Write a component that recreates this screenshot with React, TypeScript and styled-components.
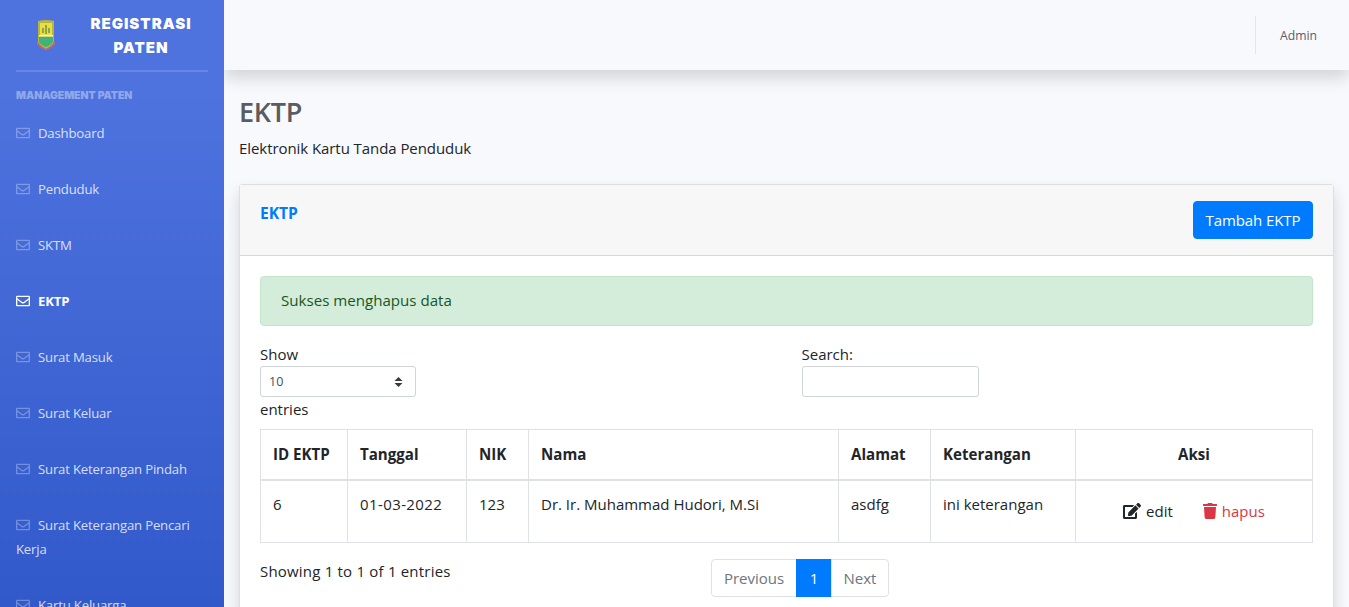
import React from "react";
import styled, { createGlobalStyle } from "styled-components";
import { FaRegEnvelope, FaEdit, FaTrash } from "react-icons/fa";

const Global = createGlobalStyle`
  html, body { margin: 0; padding: 0; height: 607px; overflow: hidden; background: #f8f9fc; }
  * { box-sizing: border-box; }
  body { font-family: "Open Sans", "Noto Sans", "Liberation Sans", sans-serif; font-size: 15px; color: #212529; }
`;

const Wrapper = styled.div`
  display: flex;
  height: 607px;
  overflow: hidden;
`;

const Sidebar = styled.nav`
  width: 224px;
  flex: none;
  height: 900px;
  background: linear-gradient(180deg, #4e73df 10%, #224abe 100%);
  padding: 0 16px;
  position: relative;
  z-index: 2;
`;

const Brand = styled.div`
  height: 70px;
  display: flex;
  align-items: center;
  gap: 30px;
  padding-left: 20px;
`;

const BrandText = styled.div`
  font-family: "Inter", "Open Sans", sans-serif;
  font-weight: 900;
  font-size: 15px;
  line-height: 24px;
  letter-spacing: 1px;
  color: #fff;
  text-align: center;
  width: 110px;
  padding-top: 1px;
`;

const Divider = styled.hr`
  margin: 0 0 16px;
  border: 0;
  border-top: 2px solid rgba(255, 255, 255, 0.15);
`;

const SectionTitle = styled.div`
  font-family: "Inter", sans-serif;
  font-weight: 900;
  font-size: 10.4px;
  line-height: 16px;
  color: rgba(255, 255, 255, 0.4);
  margin-top: 1px;
  margin-bottom: 1px;
`;

const NavItem = styled.a<{ $active?: boolean }>`
  display: block;
  padding: 16px 0;
  font-size: 13.2px;
  line-height: 24px;
  letter-spacing: -0.2px;
  font-weight: ${(p) => (p.$active ? 700 : 400)};
  color: ${(p) => (p.$active ? "#fff" : "rgba(255,255,255,0.8)")};
  svg {
    width: 14px;
    height: 14px;
    margin-right: 8px;
    vertical-align: -2px;
    color: ${(p) => (p.$active ? "#fff" : "rgba(255,255,255,0.3)")};
  }
`;

const Main = styled.div`
  flex: 1;
  min-width: 0;
  display: flex;
  flex-direction: column;
`;

const Topbar = styled.header`
  height: 70px;
  flex: none;
  background: #f8f9fc;
  box-shadow: 0 8px 16px rgba(0, 0, 0, 0.15);
  display: flex;
  justify-content: flex-end;
  align-items: center;
  padding-right: 32px;
  position: relative;
  z-index: 1;
`;

const UserBox = styled.div`
  height: 38px;
  border-left: 1px solid #e3e6f0;
  padding-left: 24px;
  display: flex;
  align-items: center;
  font-size: 12.2px;
  color: #5a5c69;
`;

const Content = styled.main`
  padding: 24px 15px 0;
`;

const PageTitle = styled.h1`
  margin: 0 0 6px;
  font-size: 27px;
  line-height: 36px;
  font-weight: 600;
  letter-spacing: -0.3px;
  color: #5a5b63;
`;

const SubTitle = styled.p`
  margin: 0 0 24px;
  font-size: 15px;
  line-height: 24px;
  letter-spacing: -0.07px;
`;

const Card = styled.section`
  background: #fff;
  border: 1px solid rgba(0, 0, 0, 0.125);
  border-radius: 4px;
  box-shadow: 0 8px 16px rgba(0, 0, 0, 0.15);
  height: 600px;
`;

const CardHeader = styled.div`
  height: 71px;
  padding: 12px 20px;
  background: #f7f7f7;
  border-bottom: 1px solid rgba(0, 0, 0, 0.125);
  display: flex;
  justify-content: space-between;
  align-items: flex-start;
`;

const CardTitle = styled.div`
  color: #007bff;
  font-weight: 700;
  font-size: 15.6px;
  line-height: 32px;
`;

const PrimaryButton = styled.button`
  height: 38px;
  width: 120px;
  margin-top: 4px;
  padding: 0;
  background: #007bff;
  border: 1px solid #007bff;
  border-radius: 4px;
  color: #fff;
  font: inherit;
  letter-spacing: -0.1px;
`;

const CardBody = styled.div`
  padding: 20px;
`;

const Alert = styled.div`
  height: 50px;
  margin-bottom: 16px;
  padding: 0 20px 2px;
  display: flex;
  align-items: center;
  background: #d4edda;
  border: 1px solid #c3e6cb;
  border-radius: 4px;
  color: #155724;
  font-size: 15.1px;
`;

const Filters = styled.div`
  display: grid;
  grid-template-columns: 541.5px 1fr;
  margin-bottom: 8px;
`;

const FieldLabel = styled.label`
  display: block;
  line-height: 24px;
  width: 178px;
`;

const LengthLabel = styled(FieldLabel)`
  width: 156px;
`;

const Select = styled.select`
  display: block;
  appearance: none;
  width: 156px;
  height: 31px;
  padding: 0 24px 0 8px;
  font: inherit;
  font-size: 12.6px;
  color: #495057;
  border: 1px solid #ced4da;
  border-radius: 3px;
  background: #fff
    url("data:image/svg+xml,%3csvg xmlns='http://www.w3.org/2000/svg' width='4' height='5' viewBox='0 0 4 5'%3e%3cpath fill='%23343a40' d='M2 0L0 2h4zm0 5L0 3h4z'/%3e%3c/svg%3e")
    no-repeat right 12px center / 9px 10px;
`;

const SearchInput = styled.input`
  display: block;
  width: 177px;
  height: 31px;
  border: 1px solid #ced4da;
  border-radius: 3px;
  background: #fff;
`;

const Table = styled.table`
  width: 1052px;
  table-layout: fixed;
  border-collapse: collapse;
  border: 1px solid #dee2e6;
`;

const HeadCell = styled.th<{ $center?: boolean; $w: number }>`
  width: ${(p) => p.$w}px;
  height: 50px;
  padding: 0 12px;
  border: 1px solid #dee2e6;
  border-bottom-width: 2px;
  text-align: ${(p) => (p.$center ? "center" : "left")};
  font-weight: 700;
  font-size: 15.1px;
`;

const Cell = styled.td`
  height: 63px;
  padding: 11px 12px 25px;
  vertical-align: top;
  line-height: 24px;
  border: 1px solid #dee2e6;
`;

const DateCell = styled(Cell)`
  letter-spacing: 0.4px;
`;

const ActionCell = styled(Cell)`
  padding: 0;
  vertical-align: middle;
`;

const Actions = styled.div`
  display: flex;
  justify-content: center;
  gap: 30px;
`;

const ActionLink = styled.a<{ $danger?: boolean }>`
  display: inline-flex;
  align-items: center;
  gap: 5px;
  color: ${(p) => (p.$danger ? "#dc3545" : "#212529")};
  svg {
    width: ${(p) => (p.$danger ? "14px" : "18px")};
    height: 16px;
  }
`;

const Footer = styled.div`
  display: grid;
  grid-template-columns: 451px 1fr;
  margin-top: 16px;
`;

const Info = styled.div`
  line-height: 24px;
  letter-spacing: 0.2px;
`;

const Pagination = styled.div`
  display: flex;
`;

const PageButton = styled.span<{ $active?: boolean; $w: number; $pos?: "first" | "last" }>`
  width: ${(p) => p.$w}px;
  height: 38px;
  display: flex;
  align-items: center;
  justify-content: center;
  border: 1px solid ${(p) => (p.$active ? "#007bff" : "#dee2e6")};
  margin-left: ${(p) => (p.$pos === "first" ? 0 : "-1px")};
  background: ${(p) => (p.$active ? "#007bff" : "#fff")};
  color: ${(p) => (p.$active ? "#fff" : "#6c757d")};
  border-radius: ${(p) => (p.$pos === "first" ? "4px 0 0 4px" : p.$pos === "last" ? "0 4px 4px 0" : "0")};
`;

const Logo = () => (
  <svg width="20" height="30" viewBox="0 0 20 30" style={{ flex: "none" }} aria-hidden="true">
    <path d="M2 1 Q10 -1 18 1 L18 21 Q18 25 10 29 Q2 25 2 21 Z" fill="#b9b43a" />
    <path d="M4 3 H16 V15 H4 Z" fill="#e3e04a" />
    <path d="M10 5 V14 M7 8 V13 M13 8 V13" stroke="#4a6a2a" strokeWidth="1" />
    <path d="M3 15 H17 V16.5 H3 Z" fill="#f3f3d0" />
    <path d="M3 17 H17 V21 Q17 24 10 27 Q3 24 3 21 Z" fill="#3fb37a" />
    <path d="M1 21 Q3 26 10 29 Q17 26 19 21 L19 24 Q16 28 10 30 Q4 28 1 24 Z" fill="#e0605a" />
  </svg>
);

const items = ["Dashboard", "Penduduk", "SKTM", "EKTP", "Surat Masuk", "Surat Keluar", "Surat Keterangan Pindah", "Surat Keterangan Pencari Kerja", "Kartu Keluarga"];

export default function App() {
  return (
    <Wrapper>
      <Global />
      <Sidebar>
        <Brand>
          <Logo />
          <BrandText>REGISTRASI PATEN</BrandText>
        </Brand>
        <Divider />
        <SectionTitle>MANAGEMENT PATEN</SectionTitle>
        {items.map((t) => (
          <NavItem key={t} $active={t === "EKTP"}>
            <FaRegEnvelope />
            {t}
          </NavItem>
        ))}
      </Sidebar>
      <Main>
        <Topbar>
          <UserBox>Admin</UserBox>
        </Topbar>
        <Content>
          <PageTitle>EKTP</PageTitle>
          <SubTitle>Elektronik Kartu Tanda Penduduk</SubTitle>
          <Card>
            <CardHeader>
              <CardTitle>EKTP</CardTitle>
              <PrimaryButton>Tambah EKTP</PrimaryButton>
            </CardHeader>
            <CardBody>
              <Alert>Sukses menghapus data</Alert>
              <Filters>
                <LengthLabel>
                  Show
                  <Select defaultValue="10">
                    <option>10</option>
                  </Select>
                  entries
                </LengthLabel>
                <FieldLabel>
                  Search:
                  <SearchInput />
                </FieldLabel>
              </Filters>
              <Table>
                <thead>
                  <tr>
                    <HeadCell $w={87}>ID EKTP</HeadCell>
                    <HeadCell $w={119}>Tanggal</HeadCell>
                    <HeadCell $w={62}>NIK</HeadCell>
                    <HeadCell $w={310}>Nama</HeadCell>
                    <HeadCell $w={92}>Alamat</HeadCell>
                    <HeadCell $w={145}>Keterangan</HeadCell>
                    <HeadCell $w={237} $center>Aksi</HeadCell>
                  </tr>
                </thead>
                <tbody>
                  <tr>
                    <Cell>6</Cell>
                    <DateCell>01-03-2022</DateCell>
                    <Cell>123</Cell>
                    <Cell>Dr. Ir. Muhammad Hudori, M.Si</Cell>
                    <Cell>asdfg</Cell>
                    <Cell>ini keterangan</Cell>
                    <ActionCell>
                      <Actions>
                        <ActionLink><FaEdit />edit</ActionLink>
                        <ActionLink $danger><FaTrash />hapus</ActionLink>
                      </Actions>
                    </ActionCell>
                  </tr>
                </tbody>
              </Table>
              <Footer>
                <Info>Showing 1 to 1 of 1 entries</Info>
                <Pagination>
                  <PageButton $w={86} $pos="first">Previous</PageButton>
                  <PageButton $w={36} $active>1</PageButton>
                  <PageButton $w={58} $pos="last">Next</PageButton>
                </Pagination>
              </Footer>
            </CardBody>
          </Card>
        </Content>
      </Main>
    </Wrapper>
  );
}
